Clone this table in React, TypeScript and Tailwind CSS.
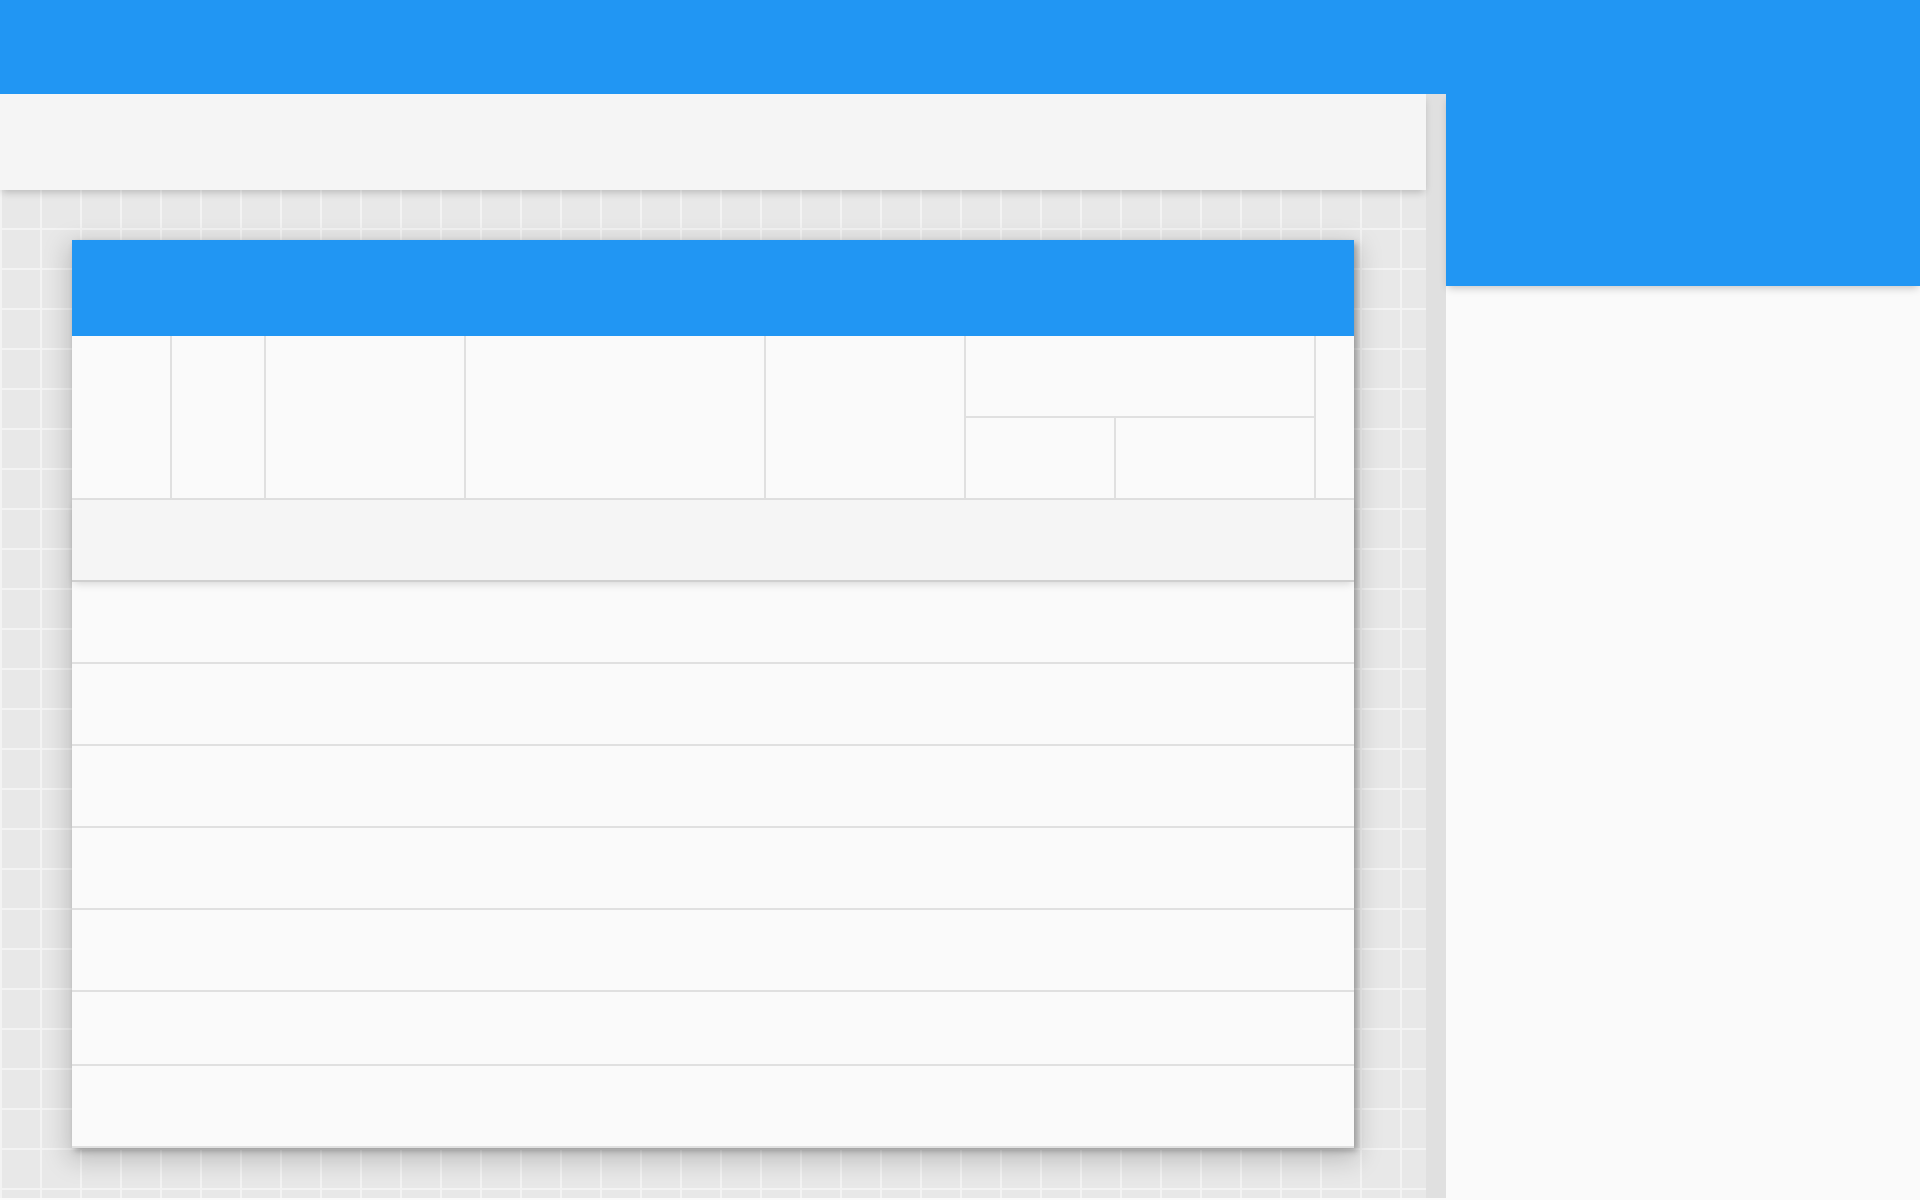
const columns = [
  { key: "c1", width: "w-[100px]" },
  { key: "c2", width: "w-[94px]" },
  { key: "c3", width: "w-[200px]" },
  { key: "c4", width: "w-[300px]" },
  { key: "c5", width: "w-[200px]" },
];

const rowHeights = ["h-[80px]", "h-[80px]", "h-[80px]", "h-[80px]", "h-[80px]", "h-[72px]", "h-[80px]"];

function DataCard() {
  return (
    <div className="w-[1282px] bg-[#fafafa] flex flex-col shadow-[3px_3px_6px_rgba(0,0,0,0.25),0_8px_24px_4px_rgba(0,0,0,0.18)]">
      {/* card title bar */}
      <div className="h-[96px] bg-[#2196F3]" />

      {/* column headers */}
      <div className="h-[164px] flex border-b-2 border-[#e0e0e0]">
        {columns.map((c) => (
          <div key={c.key} className={`${c.width} shrink-0 border-r-2 border-[#e0e0e0]`} />
        ))}
        <div className="w-[350px] shrink-0 flex flex-col border-r-2 border-[#e0e0e0]">
          <div className="h-[82px] border-b-2 border-[#e0e0e0]" />
          <div className="flex-1 flex">
            <div className="w-[150px] border-r-2 border-[#e0e0e0]" />
            <div className="flex-1" />
          </div>
        </div>
        <div className="flex-1" />
      </div>

      {/* filter row */}
      <div className="relative z-10 h-[82px] bg-[#f5f5f5] border-b-2 border-[#cfcfcf] shadow-[0_4px_8px_-2px_rgba(0,0,0,0.14)]" />

      {/* body rows */}
      {rowHeights.map((h, i) => (
        <div key={i} className={`${h} box-content border-b-2 border-[#e0e0e0]`} />
      ))}
    </div>
  );
}

export default function App() {
  return (
    <div className="w-[1920px] h-[1200px] flex flex-col overflow-hidden bg-[#fafafa] font-['Roboto',sans-serif]">
      <div className="relative z-20 h-[94px] shrink-0 bg-[#2196F3]" />

      <div className="flex-1 flex min-h-0">
        {/* main workspace */}
        <div className="w-[1426px] flex flex-col">
          <div className="relative z-10 h-[96px] shrink-0 bg-[#f5f5f5] shadow-[0_4px_8px_-2px_rgba(0,0,0,0.22)]" />
          <div className="flex-1 mb-[2px] pl-[72px] pt-[50px] bg-[#e8e8e8] bg-[linear-gradient(to_right,#f3f3f3_2px,transparent_2px),linear-gradient(to_bottom,#f3f3f3_2px,transparent_2px)] bg-[size:40px_40px] bg-[position:0px_38px]">
            <DataCard />
          </div>
        </div>

        {/* scrollbar */}
        <div className="w-[20px] mb-[2px] bg-[#e0e0e0]" />

        {/* side panel */}
        <div className="flex-1 flex flex-col">
          <div className="relative z-10 h-[192px] bg-[#2196F3] shadow-[0_4px_8px_-2px_rgba(0,0,0,0.22)]" />
          <div className="flex-1 bg-[#fafafa]" />
        </div>
      </div>
    </div>
  );
}
